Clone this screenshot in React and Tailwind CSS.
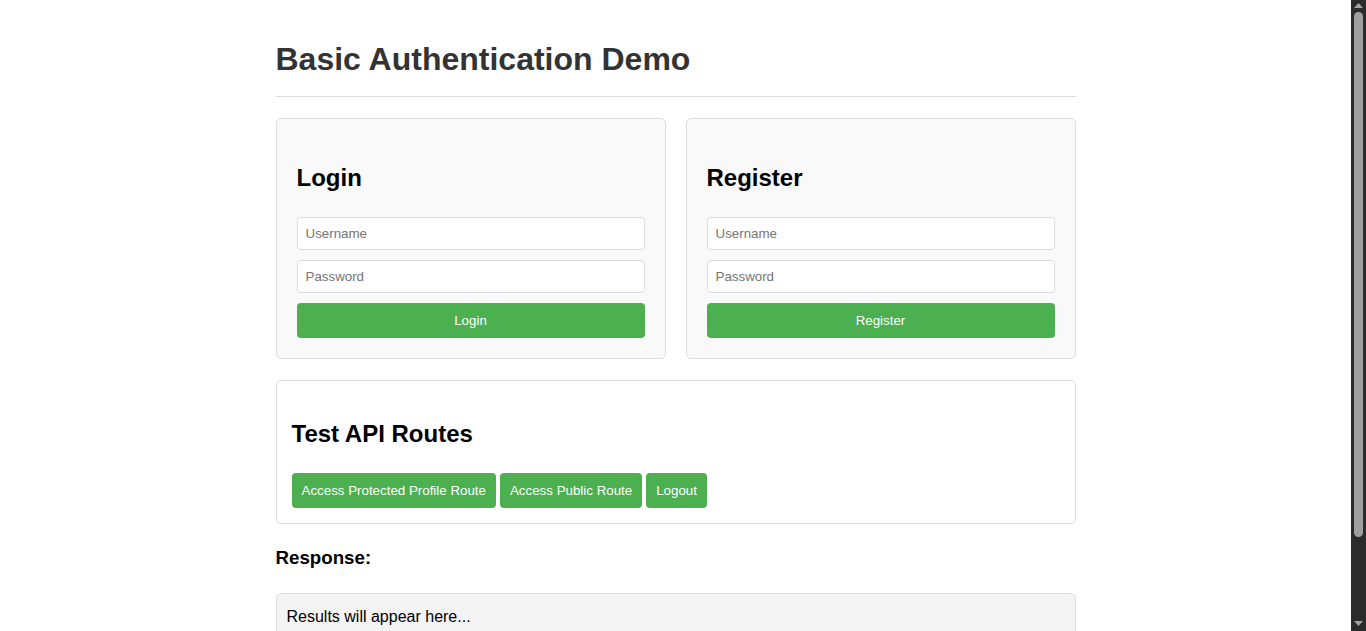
export default function App() {
  return (
    <div className="flex h-screen bg-white font-['Liberation_Sans',Arial,sans-serif] text-black">
      <div className="flex-1 overflow-y-auto">
        <div className="mx-auto max-w-[800px] pt-[41px] pb-[20px]">
          <h1 className="text-[32px] leading-[37px] font-bold text-[#333] pb-[18px] border-b border-[#ddd] mb-[21px]">
            Basic Authentication Demo
          </h1>

          <div className="grid grid-cols-2 gap-5">
            <AuthCard title="Login" action="Login" />
            <AuthCard title="Register" action="Register" />
          </div>

          <div className="mt-[21px] border border-[#ddd] rounded-[5px] bg-white p-[15px]">
            <h2 className="text-[24px] leading-[36px] font-bold mt-5 mb-[21px]">Test API Routes</h2>
            <div className="flex gap-1">
              <GreenButton>Access Protected Profile Route</GreenButton>
              <GreenButton>Access Public Route</GreenButton>
              <GreenButton>Logout</GreenButton>
            </div>
          </div>

          <h3 className="text-[18.72px] leading-[28px] font-bold mt-[20px] mb-[21px]">Response:</h3>
          <div className="border border-[#ddd] rounded-[5px] bg-[#f4f4f4] px-[10px] pt-[11px] pb-[10px] min-h-[120px] text-[16px] leading-[24px]">
            Results will appear here...
          </div>
        </div>
      </div>

      {/* window scrollbar */}
      <div className="w-[15px] shrink-0 bg-[#2b2b2b] flex flex-col items-center pt-[3px] pb-[5px]">
        <svg width="9" height="5" viewBox="0 0 9 5">
          <path d="M0 5 L4.5 0 L9 5 Z" fill="#a3a3a3" />
        </svg>
        <div className="mt-[4px] h-[525px] w-[9px] rounded-full bg-[#9f9f9f]" />
        <div className="flex-1" />
        <svg width="9" height="5" viewBox="0 0 9 5">
          <path d="M0 0 L9 0 L4.5 5 Z" fill="#a3a3a3" />
        </svg>
      </div>
    </div>
  );
}

function AuthCard({ title, action }) {
  return (
    <div className="border border-[#ddd] rounded-[5px] bg-[#f9f9f9] p-5">
      <h2 className="text-[24px] leading-[36px] font-bold mt-[21px] mb-[21px]">{title}</h2>
      <input
        type="text"
        placeholder="Username"
        className="block w-full h-[33px] px-2 mb-[10px] bg-white border border-[#ddd] rounded-[4px] text-[13.33px] placeholder:text-[#757575] outline-none"
      />
      <input
        type="password"
        placeholder="Password"
        className="block w-full h-[33px] px-2 mb-[10px] bg-white border border-[#ddd] rounded-[4px] text-[13.33px] placeholder:text-[#757575] outline-none"
      />
      <button className="block w-full h-[35px] bg-[#4caf50] text-white text-[13.33px] rounded-[4px]">
        {action}
      </button>
    </div>
  );
}

function GreenButton({ children }) {
  return (
    <button className="h-[35px] px-[10px] bg-[#4caf50] text-white text-[13.33px] rounded-[4px]">
      {children}
    </button>
  );
}
